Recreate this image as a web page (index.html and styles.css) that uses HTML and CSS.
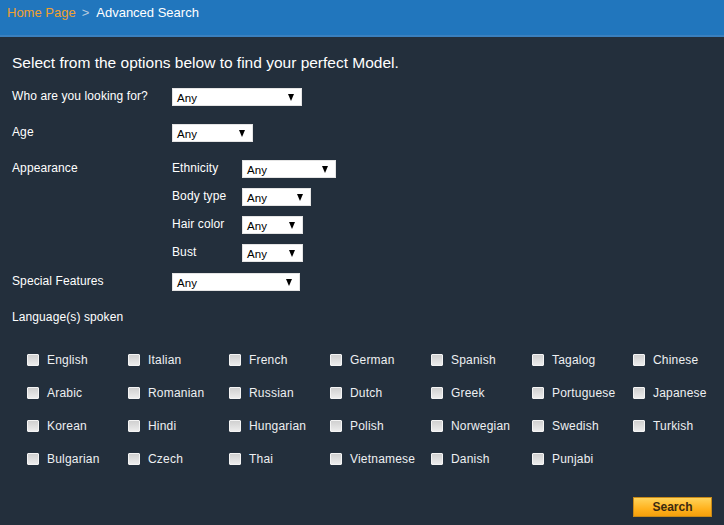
FILE: index.html
```html
<!DOCTYPE html>
<html lang="en">
<head>
<meta charset="utf-8">
<title>Advanced Search</title>
<link rel="stylesheet" href="styles.css">
</head>
<body>
<header class="topbar">
  <nav class="crumbs">
    <a class="crumb-home" href="#">Home Page</a><span class="crumb-sep">&gt;</span><span class="crumb-current">Advanced Search</span>
  </nav>
</header>
<main class="search">
  <h1 class="title">Select from the options below to find your perfect Model.</h1>

  <div class="field">
    <div class="label">Who are you looking for?</div>
    <div class="sel w130"><span>Any</span><span class="arrow"></span></div>
  </div>

  <div class="field">
    <div class="label">Age</div>
    <div class="sel w81"><span>Any</span><span class="arrow"></span></div>
  </div>

  <div class="field">
    <div class="label">Appearance</div>
    <div class="sub">
      <div class="subrow">
        <div class="sublabel">Ethnicity</div>
        <div class="sel w94"><span>Any</span><span class="arrow"></span></div>
      </div>
      <div class="subrow">
        <div class="sublabel">Body type</div>
        <div class="sel w69"><span>Any</span><span class="arrow"></span></div>
      </div>
      <div class="subrow">
        <div class="sublabel">Hair color</div>
        <div class="sel w61"><span>Any</span><span class="arrow"></span></div>
      </div>
      <div class="subrow">
        <div class="sublabel">Bust</div>
        <div class="sel w61"><span>Any</span><span class="arrow"></span></div>
      </div>
    </div>
  </div>

  <div class="field special">
    <div class="label">Special Features</div>
    <div class="sel w128"><span>Any</span><span class="arrow"></span></div>
  </div>

  <div class="lang-label">Language(s) spoken</div>

  <div class="langs">
    <label class="lang"><span class="box"></span>English</label>
    <label class="lang"><span class="box"></span>Italian</label>
    <label class="lang"><span class="box"></span>French</label>
    <label class="lang"><span class="box"></span>German</label>
    <label class="lang"><span class="box"></span>Spanish</label>
    <label class="lang"><span class="box"></span>Tagalog</label>
    <label class="lang"><span class="box"></span>Chinese</label>
    <label class="lang"><span class="box"></span>Arabic</label>
    <label class="lang"><span class="box"></span>Romanian</label>
    <label class="lang"><span class="box"></span>Russian</label>
    <label class="lang"><span class="box"></span>Dutch</label>
    <label class="lang"><span class="box"></span>Greek</label>
    <label class="lang"><span class="box"></span>Portuguese</label>
    <label class="lang"><span class="box"></span>Japanese</label>
    <label class="lang"><span class="box"></span>Korean</label>
    <label class="lang"><span class="box"></span>Hindi</label>
    <label class="lang"><span class="box"></span>Hungarian</label>
    <label class="lang"><span class="box"></span>Polish</label>
    <label class="lang"><span class="box"></span>Norwegian</label>
    <label class="lang"><span class="box"></span>Swedish</label>
    <label class="lang"><span class="box"></span>Turkish</label>
    <label class="lang"><span class="box"></span>Bulgarian</label>
    <label class="lang"><span class="box"></span>Czech</label>
    <label class="lang"><span class="box"></span>Thai</label>
    <label class="lang"><span class="box"></span>Vietnamese</label>
    <label class="lang"><span class="box"></span>Danish</label>
    <label class="lang"><span class="box"></span>Punjabi</label>
  </div>

  <div class="actions">
    <button class="btn-search" type="button">Search</button>
  </div>
</main>
</body>
</html>
```
FILE: styles.css
```css
html, body {
  margin: 0;
  padding: 0;
}
body {
  background: #232f3c;
  color: #ffffff;
  font-family: "Liberation Sans", Arial, sans-serif;
  font-size: 12px;
  letter-spacing: 0.1px;
  width: 724px;
  height: 525px;
  overflow: hidden;
}
.topbar {
  height: 35px;
  background: #2176bd;
  border-bottom: 2px solid #3a80bf;
  box-sizing: content-box;
}
.crumbs {
  padding: 5px 0 0 7px;
  font-size: 13px;
  line-height: 15px;
  letter-spacing: 0;
}
.crumb-home {
  color: #f0a030;
  text-decoration: none;
}
.crumb-sep {
  color: #b8cce0;
  margin: 0 7px 0 6px;
}
.crumb-current {
  color: #ffffff;
}
.search {
  padding: 0 12px;
}
.title {
  margin: 17px 0 16px;
  font-size: 15.5px;
  line-height: 18px;
  font-weight: normal;
  letter-spacing: 0;
  color: #ffffff;
}
.field {
  display: flex;
  align-items: flex-start;
  margin-bottom: 18px;
}
.field.special {
  margin-top: -7px;
}
.label {
  width: 160px;
  line-height: 16px;
  flex: none;
}
.sub {
  display: flex;
  flex-direction: column;
  gap: 10px;
}
.subrow {
  display: flex;
  align-items: flex-start;
}
.sublabel {
  width: 70px;
  line-height: 16px;
}
.sel {
  height: 18px;
  box-sizing: border-box;
  background: #ffffff;
  border: 1px solid #e4e4e4;
  color: #000000;
  font-size: 11.5px;
  display: flex;
  align-items: center;
  justify-content: space-between;
  padding: 1px 7px 0 4px;
}
.arrow {
  width: 0;
  height: 0;
  border-left: 3.5px solid transparent;
  border-right: 3.5px solid transparent;
  border-top: 7px solid #000000;
}
.w130 { width: 130px; }
.w81 { width: 81px; }
.w94 { width: 94px; }
.w69 { width: 69px; }
.w61 { width: 61px; }
.w128 { width: 128px; }
.lang-label {
  line-height: 16px;
}
.langs {
  margin-top: 18px;
  padding-left: 15px;
  display: grid;
  grid-template-columns: repeat(7, 101px);
  grid-auto-rows: 33px;
  align-items: center;
}
.lang {
  display: flex;
  align-items: center;
  color: #eef0f2;
  letter-spacing: 0.2px;
}
.box {
  width: 12px;
  height: 12px;
  box-sizing: border-box;
  margin-right: 8px;
  background: linear-gradient(#d0d0d0, #ececec);
  border: 1px solid #f4f4f4;
  border-radius: 1px;
}
.actions {
  display: flex;
  justify-content: flex-end;
  margin-top: 22px;
}
.btn-search {
  width: 79px;
  height: 20px;
  border: 1px solid #c88a18;
  background: linear-gradient(#ffd35a, #ffb21e 60%, #f5a00c);
  color: #3b2a10;
  font-family: "Liberation Sans", Arial, sans-serif;
  font-weight: bold;
  font-size: 12px;
  padding: 0;
  cursor: pointer;
}
```
